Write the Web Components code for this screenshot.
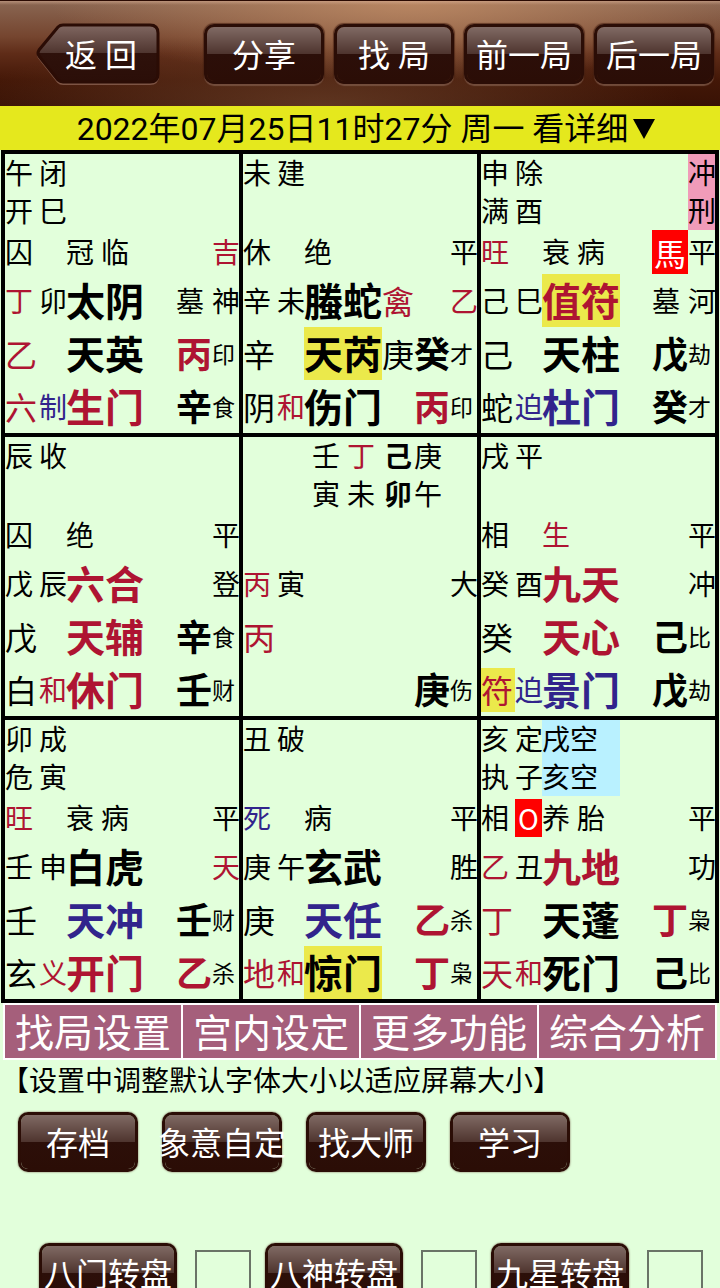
<!DOCTYPE html>
<html lang="zh-CN">
<head>
<meta charset="utf-8">
<meta name="viewport" content="width=device-width, initial-scale=1">
<title>奇门排盘</title>
<style>
  body {
    margin: 0;
    background: #e2ffdb;
    color: #000;
    font-family: Roboto, "Noto Sans CJK SC", sans-serif;
  }
</style>
</head>
<body>
<plate-app></plate-app>

<template id="t-app">
  <style>
    :host { display: block; height: 100vh; overflow: hidden; }
    .note { margin: 0; padding: 4px 0 0 1px; font-size: 28px; line-height: 36px; white-space: nowrap; }
    .actions { display: flex; gap: 24px; padding: 12px 18px 0; }
    .dials { display: flex; gap: 14px; padding: 71px 18px 0 39px; }
    gloss-button { height: 60px; }
    .actions gloss-button { width: 120px; }
  </style>
  <top-bar></top-bar>
  <date-strip>2022年07月25日11时27分 周一 看详细</date-strip>
  <palace-grid></palace-grid>
  <func-menu></func-menu>
  <p class="note">【设置中调整默认字体大小以适应屏幕大小】</p>
  <div class="actions">
    <gloss-button>存档</gloss-button>
    <gloss-button>象意自定</gloss-button>
    <gloss-button>找大师</gloss-button>
    <gloss-button>学习</gloss-button>
  </div>
  <div class="dials">
    <dial-toggle label="八门转盘"></dial-toggle>
    <dial-toggle label="八神转盘"></dial-toggle>
    <dial-toggle label="九星转盘"></dial-toggle>
  </div>
</template>

<template id="t-top">
  <style>
    :host {
      display: flex; align-items: flex-start; gap: 10px;
      box-sizing: border-box; height: 106px; padding: 23px 6px 0 36px;
      border-top: 1px solid #2a0a02;
      background:
        linear-gradient(to bottom, rgba(220,180,155,.5) 0, rgba(220,180,155,0) 4px),
        radial-gradient(ellipse 50% 75% at 57% 0, rgba(190,138,100,.9), rgba(170,110,76,0)),
        radial-gradient(ellipse 50% 70% at 45% 100%, rgba(110,68,44,.7), rgba(110,68,44,0)),
        linear-gradient(to bottom, #8a6753 0, #75452f 34%, #5f2c18 50%, #431707 76%, #381205 100%);
    }
    back-button { width: 124px; height: 60px; margin-right: auto; }
    gloss-button { width: 120px; height: 60px; }
  </style>
  <back-button>返 回</back-button>
  <gloss-button lit>分享</gloss-button>
  <gloss-button lit>找 局</gloss-button>
  <gloss-button lit>前一局</gloss-button>
  <gloss-button lit>后一局</gloss-button>
</template>

<template id="t-back">
  <style>
    :host { display: block; position: relative; }
    svg { position: absolute; inset: 0; width: 100%; height: 100%; overflow: visible; }
    button {
      position: relative; width: 100%; height: 100%; padding: 4px 0 0 6px; border: 0; background: none;
      color: #fff; font: inherit; font-size: 32px; line-height: 56px; white-space: nowrap;
    }
  </style>
  <svg viewBox="0 0 124 60" preserveAspectRatio="none" aria-hidden="true">
    <defs>
      <linearGradient id="g" x1="0" y1="0" x2="0" y2="1">
        <stop offset="0" stop-color="#806761"/><stop offset=".5" stop-color="#4e342e"/>
        <stop offset=".5" stop-color="#2e110b"/><stop offset="1" stop-color="#2b0e08"/>
      </linearGradient>
    </defs>
    <path d="M27 2H114Q122 2 122 10V51Q122 59 114 59H27Q24 59 22 57L3 33Q1 30 3 27L22 4Q24 2 27 2Z" fill="none" stroke="#7d5444" stroke-width="2" transform="translate(0 1)"/>
    <path d="M27 1H114Q122 1 122 9V50Q122 58 114 58H27Q24 58 22 56L3 32Q1 29 3 26L22 3Q24 1 27 1Z" fill="url(#g)" stroke="#2b0c05" stroke-width="3"/>
  </svg>
  <button type="button"><slot></slot></button>
</template>

<template id="t-gloss">
  <style>
    :host { display: block; }
    button {
      display: flex; align-items: center; justify-content: center;
      box-sizing: border-box; width: 100%; height: 100%; padding: 4px 0 0;
      border: 3px solid #2b0d06; border-radius: 10px;
      background: linear-gradient(to bottom, #806a64 0, #4e342e 50%, #2c0f09 50%, #2b0d06 100%) padding-box;
      box-shadow: 0 0 2px rgba(80,40,30,.8);
      color: #fff; font: inherit; font-size: 32px; line-height: 48px; white-space: nowrap;
    }
    :host([lit]) button { box-shadow: 0 2px 1px rgba(130,92,75,.75), 0 0 1px 1px rgba(60,24,12,.6); }
  </style>
  <button type="button"><slot></slot></button>
</template>

<template id="t-date">
  <style>
    :host { display: block; background: #e5e81d; }
    a {
      display: flex; justify-content: center; align-items: center; gap: 5px;
      height: 42px; padding: 2px 0 0 12px; color: #000; text-decoration: none;
      font-size: 32px; line-height: 42px; white-space: nowrap;
    }
    svg { width: 22px; height: 20px; }
  </style>
  <a href="#detail"><slot></slot><svg viewBox="0 0 22 20" aria-hidden="true"><path d="M0 0H22L11 20Z"/></svg></a>
</template>

<template id="t-grid">
  <style>
    :host {
      display: grid; grid-template-columns: repeat(3, minmax(0, 1fr)); gap: 4px;
      margin: 0 1px; padding: 4px; background: #000;
    }
  </style>
</template>

<template id="t-palace">
  <style>
    :host {
      display: grid; background: #e2ffdb;
      grid-template-columns: 34fr 27fr 78fr 32fr 36fr 27fr;
      grid-template-rows: 38px 38px 44px 53px 53px 53px;
      align-items: center;
    }
    span { min-width: 0; width: 100%; padding-top: 4px; white-space: pre; font-size: 28px; line-height: 34px; }
    i { font-style: normal; }
    .big { font-size: 32px; line-height: 40px; }
    .star { padding-top: 6px; font-size: 39px; font-weight: 700; line-height: 47px; }
    .stem { padding-top: 6px; font-size: 36px; font-weight: 700; line-height: 47px; }
    .tiny { font-size: 23px; }
    .bold { font-weight: 700; }
    .end { text-align: right; }
    .mid { text-align: center; }
    .r, i { color: #ae1432; }
    .b { color: #31248c; }
    .y { background: #ebe94b; }
    .p { background: #f09bb9; }
    .c { background: #b9f1ff; }
    .alert { padding-top: 0; background: #f00; color: #fff; text-align: center; line-height: 38px; font-family: "Noto Sans CJK SC", sans-serif; }
    .alert.big { line-height: 44px; }
  </style>
</template>

<template id="t-menu">
  <style>
    :host {
      display: grid; grid-template-columns: repeat(4, minmax(0, 1fr)); gap: 2px;
      margin: 0 3px; padding: 2px; background: #fff;
    }
    button {
      height: 53px; padding: 6px 0 0; border: 0; background: #a55f7b; color: #fff;
      font: inherit; font-size: 39px; line-height: 47px; white-space: nowrap;
    }
  </style>
  <button type="button">找局设置</button>
  <button type="button">宫内设定</button>
  <button type="button">更多功能</button>
  <button type="button">综合分析</button>
</template>

<template id="t-dial">
  <style>
    :host { display: flex; gap: 18px; }
    gloss-button { width: 138px; height: 60px; }
    input {
      appearance: none; box-sizing: border-box; width: 56px; height: 56px; margin: 7px 0 0;
      border: 2px solid #6a7467; background: transparent;
    }
    input:checked { background: #6a7467; }
  </style>
  <gloss-button></gloss-button><input type="checkbox">
</template>

<script>
  class TemplateElement extends HTMLElement {
    constructor() {
      super();
      this.attachShadow({ mode: "open" })
        .append(document.getElementById(this.constructor.template).content.cloneNode(true));
    }
  }
  const define = (name, template) =>
    customElements.define(name, class extends TemplateElement { static template = template; });

  // Each palace is six rows of [column, classes, text] entries.
  const head = (a, b, c, d) => [[[1, "", a], [2, "", b]], c ? [[1, "", c], [2, "", d]] : []];
  const PALACES = [
    [...head("午", "闭", "开", "巳"),
      [[1, "", "囚"], [3, "", "冠 临"], [6, "r", "吉"]],
      [[1, "r", "丁"], [2, "", "卯"], [3, "star", "太阴"], [5, "", "墓"], [6, "", "神"]],
      [[1, "big r", "乙"], [3, "star", "天英"], [5, "stem r", "丙"], [6, "tiny", "印"]],
      [[1, "big r", "六"], [2, "b", "制"], [3, "star r", "生门"], [5, "stem", "辛"], [6, "tiny", "食"]]],
    [...head("未", "建"),
      [[1, "", "休"], [3, "", "绝"], [6, "", "平"]],
      [[1, "", "辛"], [2, "", "未"], [3, "star", "螣蛇"], [4, "big r", "禽"], [6, "r", "乙"]],
      [[1, "big", "辛"], [3, "star y", "天芮"], [4, "big", "庚"], [5, "stem", "癸"], [6, "tiny", "才"]],
      [[1, "big", "阴"], [2, "r", "和"], [3, "star", "伤门"], [5, "stem r", "丙"], [6, "tiny", "印"]]],
    [[[1, "", "申"], [2, "", "除"], [6, "p", "冲"]],
      [[1, "", "满"], [2, "", "酉"], [6, "p", "刑"]],
      [[1, "r", "旺"], [3, "", "衰 病"], [5, "alert big", "馬"], [6, "", "平"]],
      [[1, "", "己"], [2, "", "巳"], [3, "star r y", "值符"], [5, "", "墓"], [6, "", "河"]],
      [[1, "big", "己"], [3, "star", "天柱"], [5, "stem", "戊"], [6, "tiny", "劫"]],
      [[1, "big", "蛇"], [2, "b", "迫"], [3, "star b", "杜门"], [5, "stem", "癸"], [6, "tiny", "才"]]],
    [...head("辰", "收"),
      [[1, "", "囚"], [3, "", "绝"], [6, "", "平"]],
      [[1, "", "戊"], [2, "", "辰"], [3, "star r", "六合"], [6, "", "登"]],
      [[1, "big", "戊"], [3, "star r", "天辅"], [5, "stem", "辛"], [6, "tiny", "食"]],
      [[1, "big", "白"], [2, "r", "和"], [3, "star r", "休门"], [5, "stem", "壬"], [6, "tiny", "财"]]],
    [[[3, "end", "壬 <i>丁</i> "], [4, "bold mid", "己"], [5, "", "庚"]],
      [[3, "end", "寅 未 "], [4, "bold mid", "卯"], [5, "", "午"]],
      [],
      [[1, "r", "丙"], [2, "", "寅"], [6, "", "大"]],
      [[1, "big r", "丙"]],
      [[5, "stem", "庚"], [6, "tiny", "伤"]]],
    [...head("戌", "平"),
      [[1, "", "相"], [3, "r", "生"], [6, "", "平"]],
      [[1, "", "癸"], [2, "", "酉"], [3, "star r", "九天"], [6, "", "冲"]],
      [[1, "big", "癸"], [3, "star r", "天心"], [5, "stem", "己"], [6, "tiny", "比"]],
      [[1, "big r y", "符"], [2, "b", "迫"], [3, "star b", "景门"], [5, "stem", "戊"], [6, "tiny", "劫"]]],
    [...head("卯", "成", "危", "寅"),
      [[1, "r", "旺"], [3, "", "衰 病"], [6, "", "平"]],
      [[1, "", "壬"], [2, "", "申"], [3, "star", "白虎"], [6, "r", "天"]],
      [[1, "big", "壬"], [3, "star b", "天冲"], [5, "stem", "壬"], [6, "tiny", "财"]],
      [[1, "big", "玄"], [2, "r", "义"], [3, "star r", "开门"], [5, "stem r", "乙"], [6, "tiny", "杀"]]],
    [...head("丑", "破"),
      [[1, "b", "死"], [3, "", "病"], [6, "", "平"]],
      [[1, "", "庚"], [2, "", "午"], [3, "star", "玄武"], [6, "", "胜"]],
      [[1, "big", "庚"], [3, "star b", "天任"], [5, "stem r", "乙"], [6, "tiny", "杀"]],
      [[1, "big r", "地"], [2, "r", "和"], [3, "star y", "惊门"], [5, "stem r", "丁"], [6, "tiny", "枭"]]],
    [[[1, "", "亥"], [2, "", "定"], [3, "c", "戌空"]],
      [[1, "", "执"], [2, "", "子"], [3, "c", "亥空"]],
      [[1, "", "相"], [2, "alert", "O"], [3, "", "养 胎"], [6, "", "平"]],
      [[1, "r", "乙"], [2, "", "丑"], [3, "star r", "九地"], [6, "", "功"]],
      [[1, "big r", "丁"], [3, "star", "天蓬"], [5, "stem r", "丁"], [6, "tiny", "枭"]],
      [[1, "big r", "天"], [2, "r", "和"], [3, "star", "死门"], [5, "stem", "己"], [6, "tiny", "比"]]]
  ];

  class PalaceCell extends TemplateElement {
    static template = "t-palace";
    set rows(rows) {
      rows.forEach((row, r) => row.forEach(([col, cls, text]) => {
        const s = document.createElement("span");
        s.className = cls;
        s.style.gridArea = `${r + 1} / ${col}`;
        s.innerHTML = text;
        this.shadowRoot.append(s);
      }));
    }
  }
  customElements.define("palace-cell", PalaceCell);

  customElements.define("palace-grid", class extends TemplateElement {
    static template = "t-grid";
    connectedCallback() {
      for (const rows of PALACES) {
        const cell = document.createElement("palace-cell");
        cell.rows = rows;
        this.shadowRoot.append(cell);
      }
    }
  });

  define("gloss-button", "t-gloss");
  define("back-button", "t-back");
  define("date-strip", "t-date");
  define("func-menu", "t-menu");
  define("top-bar", "t-top");

  customElements.define("dial-toggle", class extends TemplateElement {
    static template = "t-dial";
    connectedCallback() {
      const label = this.getAttribute("label");
      this.shadowRoot.querySelector("gloss-button").textContent = label;
      this.shadowRoot.querySelector("input").setAttribute("aria-label", label);
    }
  });

  define("plate-app", "t-app");
</script>
</body>
</html>
